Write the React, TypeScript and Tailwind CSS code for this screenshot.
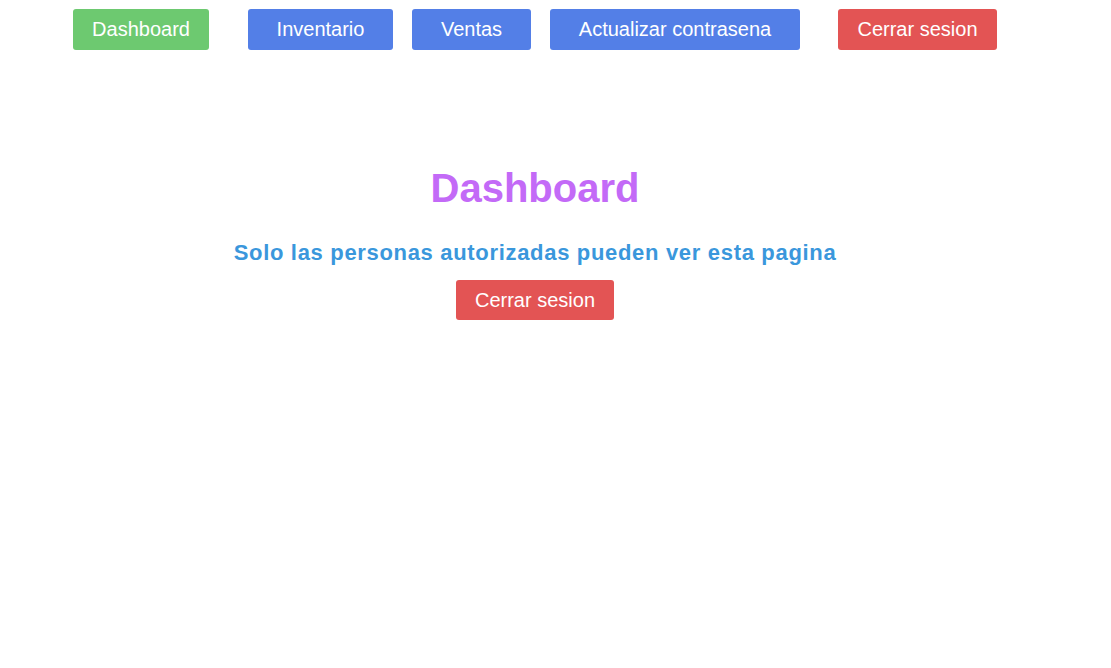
import React from "react";

const btn =
  "rounded-[3px] text-white text-[20px] flex items-center justify-center";

export default function App() {
  return (
    <div
      className="w-[1070px] min-h-[668px] bg-white"
      style={{ fontFamily: '"Liberation Sans", Arial, sans-serif' }}
    >
      <nav className="flex pt-[9px] pl-[73px]">
        <button className={`${btn} h-[41px] pb-[1px] w-[136px] bg-[#6dc970]`}>Dashboard</button>
        <button className={`${btn} h-[41px] pb-[1px] w-[145px] ml-[39px] bg-[#537fe7]`}>Inventario</button>
        <button className={`${btn} h-[41px] pb-[1px] w-[119px] ml-[19px] bg-[#537fe7]`}>Ventas</button>
        <button className={`${btn} h-[41px] pb-[1px] w-[250px] ml-[19px] bg-[#537fe7]`}>Actualizar contrasena</button>
        <button className={`${btn} h-[41px] pb-[1px] w-[159px] ml-[38px] bg-[#e35454]`}>Cerrar sesion</button>
      </nav>
      <main className="flex flex-col items-center">
        <h1 className="mt-[115px] text-[40px] leading-[46px] font-bold text-[#c36af7]">Dashboard</h1>
        <h2 className="mt-[29px] text-[22px] leading-[25px] font-bold tracking-[0.68px] text-[#3a97dc]">
          Solo las personas autorizadas pueden ver esta pagina
        </h2>
        <button className={`${btn} h-[40px] w-[158px] mt-[15px] bg-[#e35454]`}>Cerrar sesion</button>
      </main>
    </div>
  );
}
